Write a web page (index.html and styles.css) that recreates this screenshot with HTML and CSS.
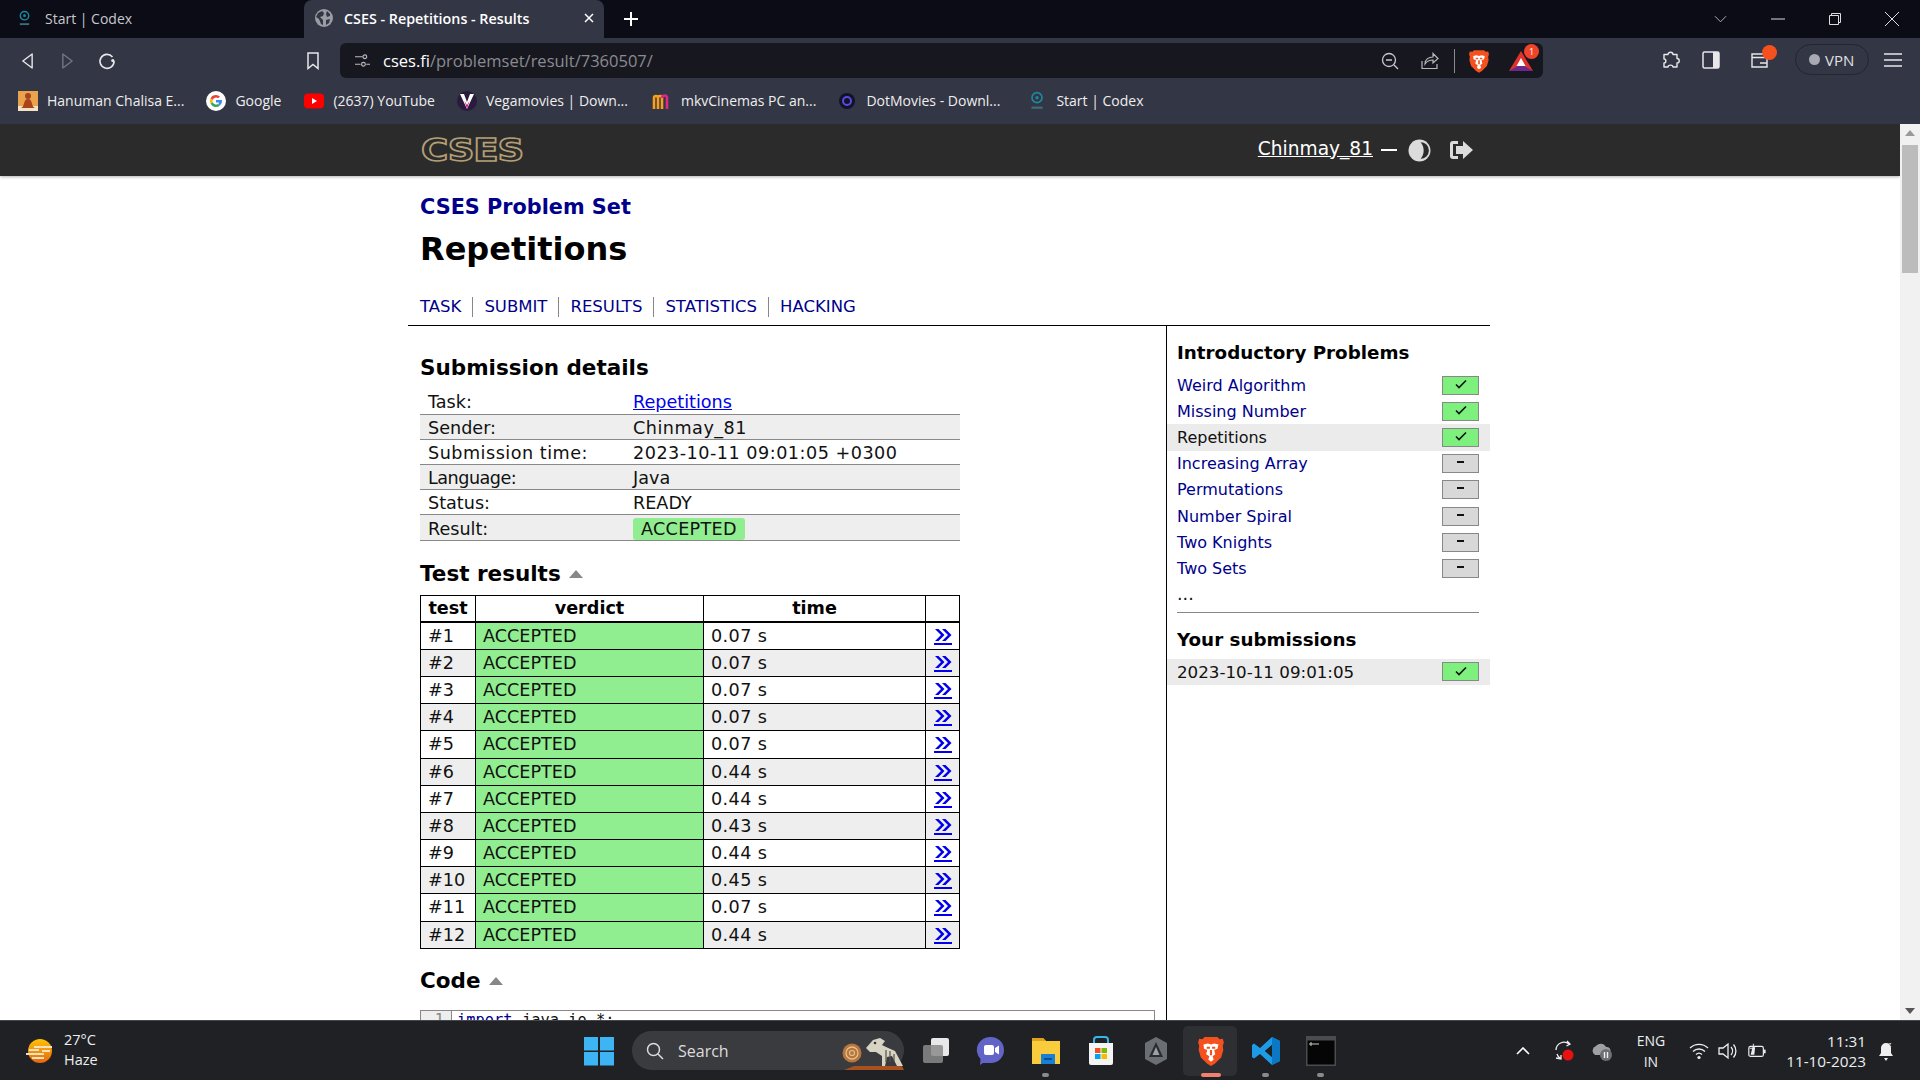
FILE: index.html

```html
<!DOCTYPE html>
<html lang="en">
<head>
  <meta charset="UTF-8" />
  <title>CSES - Repetitions - Results</title>
  <link rel="stylesheet" href="styles.css">
</head>
<body>
  <svg class="defs" width="0" height="0">
    <symbol id="lion" viewBox="0 0 24 28">
      <path fill="#f4511e" d="M6 1h12l2 2 3-.5L24 6l-1 3 .5 4-2 7-6 6-3.500 2-3.500-2-6-6-2-7L1 9 0 6l1-3.500L4 3z"/>
      <path fill="#fff" d="M5 8l4-1 3 1 3-1 4 1-1 4-3 1 1 4-2.500 2 1 3-2.500 2-2.500-2 1-3L7.500 17l1-4-3-1z"/>
      <path fill="#f4511e" d="M8 10h3v2H8zm5 0h3v2h-3zM11 13h2v5h-2z"/>
    </symbol>
    <symbol id="check" viewBox="0 0 14 12">
      <path d="M2 6.500l3 3 7-7" fill="none" stroke="#111" stroke-width="1.600"/>
    </symbol>
    <symbol id="dbl" viewBox="0 0 18 14">
      <path d="M1 1l6 6-6 6h3.500l6-6-6-6zM8 1l6 6-6 6h3.500l6-6-6-6z" fill="#00e"/>
    </symbol>
  </svg>

  <div class="tabbar">
    <div class="tab">
      <svg class="favicon" viewBox="0 0 16 18"><circle cx="8" cy="6" r="4.500" fill="none" stroke="#1b8a9e" stroke-width="1.500"/><circle cx="8" cy="6" r="1.500" fill="#1b8a9e"/><path d="M3 15h10" stroke="#3c6d78" stroke-width="2"/></svg>
      <span>Start | Codex</span>
    </div>
    <div class="tab tab-active">
      <svg class="favicon globe" viewBox="0 0 18 18"><circle cx="9" cy="9" r="9" fill="#9a9ca3"/><path d="M3 4l4-2 2 2-1 3-3 1 3 3 0 5-2-1-2-5-3-2zM12 2l3 3 0 2-3 1-1-3zM11 11l4-1-1 4-3 2z" fill="#333644"/></svg>
      <span class="tab-title">CSES - Repetitions - Results</span>
      <svg class="tab-close" viewBox="0 0 10 10"><path d="M1 1l8 8M9 1l-8 8" stroke="#fff" stroke-width="1.500"/></svg>
    </div>
    <svg class="tab-new" viewBox="0 0 14 14"><path d="M7 0v14M0 7h14" stroke="#fff" stroke-width="2"/></svg>
    <div class="win-controls">
      <svg viewBox="0 0 14 8" class="win-chev"><path d="M1 1l6 6 6-6" fill="none" stroke="#bbb"/></svg>
      <svg viewBox="0 0 14 14" class="win-btn"><path d="M0 7h14" stroke="#ddd"/></svg>
      <svg viewBox="0 0 14 14" class="win-btn"><path d="M1.500 3.500h9v9h-9zM3.500 3V1.500h9v9H11" fill="none" stroke="#ddd"/></svg>
      <svg viewBox="0 0 14 14" class="win-btn"><path d="M0 0l14 14M14 0L0 14" stroke="#ddd"/></svg>
    </div>
  </div>

  <div class="toolbar">
    <div class="nav-btns">
      <svg viewBox="0 0 14 18"><path d="M12 1.500v15L2 9z" fill="none" stroke="#e8e8ea" stroke-width="1.500" stroke-linejoin="round"/></svg>
      <svg viewBox="0 0 14 18"><path d="M2 1.500v15L12 9z" fill="none" stroke="#74767f" stroke-width="1.500" stroke-linejoin="round"/></svg>
      <svg viewBox="0 0 18 18"><path d="M14.500 5A7 7 0 1 0 16 9" fill="none" stroke="#e8e8ea" stroke-width="1.600"/><circle cx="14.800" cy="8.500" r="1.600" fill="#e8e8ea"/></svg>
    </div>
    <svg class="bookmark" viewBox="0 0 14 18"><path d="M2 1h10v15.500l-5-4-5 4z" fill="none" stroke="#e8e8ea" stroke-width="1.500"/></svg>
    <div class="address">
      <svg class="tune" viewBox="0 0 16 16"><path d="M0 4h8M12 12h4M0 12h6" stroke="#bbb" stroke-width="1.200"/><circle cx="10.500" cy="4" r="2" fill="none" stroke="#bbb" stroke-width="1.200"/><circle cx="9" cy="12" r="2" fill="none" stroke="#bbb" stroke-width="1.200"/></svg>
      <span class="url"><b>cses.fi</b>/problemset/result/7360507/</span>
      <svg class="addr-icon" viewBox="0 0 18 18"><circle cx="8" cy="8" r="6.500" fill="none" stroke="#c8c8cc" stroke-width="1.300"/><path d="M5 8h6M13 13l4 4" stroke="#c8c8cc" stroke-width="1.300"/></svg>
      <svg class="addr-icon" viewBox="0 0 18 18"><path d="M1 9v7.500h15V12M4 12c0-5 4-7 8-7V1.500l5 5-5 4.500V8c-4 0-6 1-8 4z" fill="none" stroke="#b8b8bc" stroke-width="1.200"/></svg>
      <i class="addr-sep"></i>
      <svg class="addr-lion"><use href="#lion"/></svg>
      <div class="bat">
        <svg viewBox="0 0 24 20"><path d="M12 0l12 20H0z" fill="#e0322b"/><path d="M0 20l12-7 12 7z" fill="#6a2a8c"/><path d="M12 7l4.500 8h-9z" fill="#fff"/></svg>
        <span class="bat-count">1</span>
      </div>
    </div>
    <svg class="tool-icon puzzle" viewBox="0 0 18 18"><path d="M6 3.500C6 .5 11 .5 11 3.500h4v4c3 0 3 4.500 0 4.500v4h-4c0-2.500-5-2.500-5 0H2v-4c2.500 0 2.500-4 0-4V3.500z" fill="none" stroke="#e8e8ea" stroke-width="1.400" stroke-linejoin="round"/></svg>
    <svg class="tool-icon panel" viewBox="0 0 18 18"><rect x="1" y="1" width="16" height="16" rx="1.500" fill="none" stroke="#e8e8ea" stroke-width="1.500"/><rect x="11" y="1" width="6" height="16" fill="#e8e8ea"/></svg>
    <div class="wallet">
      <svg viewBox="0 0 18 18"><path d="M1 3h15v13H1zM1 6.500h15M9 12h7" fill="none" stroke="#e8e8ea" stroke-width="1.400"/></svg>
      <i class="wallet-dot"></i>
    </div>
    <div class="vpn"><i class="vpn-dot"></i>VPN</div>
    <svg class="tool-icon menu" viewBox="0 0 18 16"><path d="M0 2h18M0 8h18M0 14h18" stroke="#e8e8ea" stroke-width="1.600"/></svg>
  </div>

  <div class="bookmarks">
    <div class="bm bm-a"><svg viewBox="0 0 20 20"><rect width="20" height="20" fill="#e9a24e"/><rect y="15" width="20" height="5" fill="#f3e3c4"/><circle cx="10" cy="5" r="3" fill="#a8431a"/><path d="M10 8c5 0 3 8 7 9H3c4-1 2-9 7-9z" fill="#a8431a"/></svg><span>Hanuman Chalisa E...</span></div>
    <div class="bm bm-b"><svg viewBox="0 0 20 20"><circle cx="10" cy="10" r="10" fill="#fff"/><path d="M10 4a6 6 0 0 1 4 1.500l-1.800 1.800A3.500 3.500 0 0 0 6.700 9L4.600 7.300A6 6 0 0 1 10 4z" fill="#ea4335"/><path d="M4.600 7.300L6.700 9a3.500 3.500 0 0 0 0 2.200l-2.100 1.600a6 6 0 0 1 0-5.500z" fill="#fbbc05"/><path d="M4.600 12.800l2.100-1.600a3.500 3.500 0 0 0 5.200 1.800l2 1.500A6 6 0 0 1 4.600 12.800z" fill="#34a853"/><path d="M16 9h-6v2.400h3.300a3 3 0 0 1-1.400 1.600l2 1.500A6 6 0 0 0 16 9z" fill="#4285f4"/></svg><span>Google</span></div>
    <div class="bm bm-c"><svg viewBox="0 0 20 20"><rect y="2.500" width="20" height="15" rx="4" fill="#f00"/><path d="M8 7l5 3-5 3z" fill="#fff"/></svg><span>(2637) YouTube</span></div>
    <div class="bm bm-d"><svg viewBox="0 0 20 20"><circle cx="10" cy="10" r="10" fill="#2a1a3e"/><path d="M3 3h4l3 8 3-8h4l-7 15z" fill="#fff"/><path d="M7.500 10l2.500 8 2.500-8L10 14z" fill="#d81b7a"/></svg><span>Vegamovies | Down...</span></div>
    <div class="bm bm-e"><svg viewBox="0 0 20 20"><path d="M2 18V7a2 2 0 0 1 4 0v11M6 7a2 2 0 0 1 4 0v11" fill="none" stroke="#f9a01b" stroke-width="2.600"/><path d="M10 7a2.500 2.500 0 0 1 5 0v11" fill="none" stroke="#e0288a" stroke-width="2.600"/></svg><span>mkvCinemas PC an...</span></div>
    <div class="bm bm-f"><svg viewBox="0 0 20 20"><circle cx="10" cy="10" r="8" fill="#12122a"/><circle cx="10" cy="10" r="4" fill="none" stroke="#5a4ae0" stroke-width="2"/></svg><span>DotMovies - Downl...</span></div>
    <div class="bm bm-g"><svg viewBox="0 0 16 18"><circle cx="8" cy="6" r="4.500" fill="none" stroke="#1b8a9e" stroke-width="1.500"/><circle cx="8" cy="6" r="1.500" fill="#1b8a9e"/><path d="M3 15h10" stroke="#3c6d78" stroke-width="2"/></svg><span>Start | Codex</span></div>
  </div>

  <div class="viewport">
    <div class="page">
      <header class="site-head">
        <div class="site-inner">
          <span class="logo">CSES</span>
          <div class="controls">
            <a class="user" href="#">Chinmay_81</a>
            <span class="dash"></span>
            <svg class="contrast" viewBox="0 0 22 22"><circle cx="11" cy="11" r="10.500" fill="#dcdcdc"/><path d="M12 3a8 8 0 0 1 0 16c2-2 3-5 3-8s-1-6-3-8z" fill="#2b2b2b"/></svg>
            <svg class="signout" viewBox="0 0 24 20"><path d="M9 1H4a3 3 0 0 0-3 3v12a3 3 0 0 0 3 3h5v-3H4V4h5z" fill="#dcdcdc"/><path d="M14 1l10 9-10 9v-5H7V6h7z" fill="#dcdcdc"/></svg>
          </div>
        </div>
      </header>

      <div class="skeleton">
        <div class="title-block">
          <h2 class="set-title">CSES Problem Set</h2>
          <h1>Repetitions</h1>
          <div class="nav">
            <a href="#">TASK</a>
            <a href="#">SUBMIT</a>
            <a href="#">RESULTS</a>
            <a href="#">STATISTICS</a>
            <a href="#">HACKING</a>
          </div>
        </div>

        <div class="columns">
          <div class="content">
            <h3 class="first">Submission details</h3>
            <table class="details">
              <tr><td class="label">Task:</td><td><a href="#">Repetitions</a></td></tr>
              <tr><td class="label">Sender:</td><td class="spaced">Chinmay_81</td></tr>
              <tr><td class="label spaced">Submission time:</td><td class="spaced">2023-10-11 09:01:05 +0300</td></tr>
              <tr><td class="label tight">Language:</td><td>Java</td></tr>
              <tr><td class="label">Status:</td><td>READY</td></tr>
              <tr><td class="label">Result:</td><td><span class="verdict-tag">ACCEPTED</span></td></tr>
            </table>

            <h3 class="tests-head">Test results <i class="caret"></i></h3>
            <table class="tests">
              <tr><th class="c-test">test</th><th class="c-verdict">verdict</th><th class="c-time">time</th><th class="c-link"></th></tr>
              <tr><td>#1</td><td class="ok">ACCEPTED</td><td class="t">0.07 s</td><td class="more"><a href="#"><svg><use href="#dbl"/></svg></a></td></tr>
              <tr><td>#2</td><td class="ok">ACCEPTED</td><td class="t">0.07 s</td><td class="more"><a href="#"><svg><use href="#dbl"/></svg></a></td></tr>
              <tr><td>#3</td><td class="ok">ACCEPTED</td><td class="t">0.07 s</td><td class="more"><a href="#"><svg><use href="#dbl"/></svg></a></td></tr>
              <tr><td>#4</td><td class="ok">ACCEPTED</td><td class="t">0.07 s</td><td class="more"><a href="#"><svg><use href="#dbl"/></svg></a></td></tr>
              <tr><td>#5</td><td class="ok">ACCEPTED</td><td class="t">0.07 s</td><td class="more"><a href="#"><svg><use href="#dbl"/></svg></a></td></tr>
              <tr><td>#6</td><td class="ok">ACCEPTED</td><td class="t">0.44 s</td><td class="more"><a href="#"><svg><use href="#dbl"/></svg></a></td></tr>
              <tr><td>#7</td><td class="ok">ACCEPTED</td><td class="t">0.44 s</td><td class="more"><a href="#"><svg><use href="#dbl"/></svg></a></td></tr>
              <tr><td>#8</td><td class="ok">ACCEPTED</td><td class="t">0.43 s</td><td class="more"><a href="#"><svg><use href="#dbl"/></svg></a></td></tr>
              <tr><td>#9</td><td class="ok">ACCEPTED</td><td class="t">0.44 s</td><td class="more"><a href="#"><svg><use href="#dbl"/></svg></a></td></tr>
              <tr><td>#10</td><td class="ok">ACCEPTED</td><td class="t">0.45 s</td><td class="more"><a href="#"><svg><use href="#dbl"/></svg></a></td></tr>
              <tr><td>#11</td><td class="ok">ACCEPTED</td><td class="t">0.07 s</td><td class="more"><a href="#"><svg><use href="#dbl"/></svg></a></td></tr>
              <tr><td>#12</td><td class="ok">ACCEPTED</td><td class="t">0.44 s</td><td class="more"><a href="#"><svg><use href="#dbl"/></svg></a></td></tr>
            </table>

            <h3 class="code-head">Code <i class="caret"></i></h3>
            <div class="code">
              <span class="gutter">1</span>
              <span class="code-line"><span class="kw">import</span> java.io.*;</span>
            </div>
          </div>

          <aside class="sidebar">
            <h4>Introductory Problems</h4>
            <ul class="tasks">
              <li><a href="#">Weird Algorithm</a><span class="badge done"><svg><use href="#check"/></svg></span></li>
              <li><a href="#">Missing Number</a><span class="badge done"><svg><use href="#check"/></svg></span></li>
              <li class="current">Repetitions<span class="badge done"><svg><use href="#check"/></svg></span></li>
              <li><a href="#">Increasing Array</a><span class="badge todo"></span></li>
              <li><a href="#">Permutations</a><span class="badge todo"></span></li>
              <li><a href="#">Number Spiral</a><span class="badge todo"></span></li>
              <li><a href="#">Two Knights</a><span class="badge todo"></span></li>
              <li><a href="#">Two Sets</a><span class="badge todo"></span></li>
            </ul>
            <div class="dots">...</div>
            <hr>
            <h4 class="subs-head">Your submissions</h4>
            <ul class="tasks">
              <li class="current sub-date">2023-10-11 09:01:05<span class="badge done"><svg><use href="#check"/></svg></span></li>
            </ul>
          </aside>
        </div>
      </div>
    </div>
    <div class="scrollbar">
      <i class="arrow-up"></i>
      <div class="thumb"></div>
      <i class="arrow-down"></i>
    </div>
  </div>

  <div class="taskbar">
    <div class="weather">
      <svg viewBox="0 0 30 30"><defs><linearGradient id="sun" x1="0" y1="0" x2="0" y2="1"><stop offset="0" stop-color="#ffc107"/><stop offset="1" stop-color="#e8650e"/></linearGradient></defs><circle cx="16" cy="15" r="12" fill="url(#sun)"/><path d="M2 18h18M10 11h18M5 14h10M18 15h8M8 22h12" stroke="#f3e2c0" stroke-width="2"/></svg>
      <div class="weather-text"><span>27°C</span><span>Haze</span></div>
    </div>
    <div class="task-center">
      <svg class="t-icon" viewBox="0 0 30 30"><path d="M0 1h14v13.500H0zM16 1h14v13.500H16zM0 16h14v13.500H0zM16 16h14v13.500H16z" fill="#3db5f4"/></svg>
      <div class="search">
        <svg viewBox="0 0 18 18"><circle cx="7.500" cy="7.500" r="6" fill="none" stroke="#ddd" stroke-width="1.500"/><path d="M12 12l5 5" stroke="#ddd" stroke-width="1.500"/></svg>
        <span>Search</span>
        <svg class="search-art" viewBox="0 0 62 34"><path d="M2 34l10-4h48l2 4z" fill="#a8501e"/><circle cx="10" cy="17" r="9.500" fill="#b5763d"/><circle cx="10" cy="17" r="6" fill="none" stroke="#e6c08f" stroke-width="1.300"/><circle cx="10" cy="17" r="2.500" fill="none" stroke="#e6c08f" stroke-width="1.200"/><path d="M24 12l7-8 7-2 5 3-3 4 4 2 9 4 8 15h-6l-5-10-5 1-2 9h-3l0-10-6-4-6 0z" fill="#d8d4c4"/><path d="M44 14l0 12M48 15l0 11M52 18l0 8" stroke="#55524a" stroke-width="1.200"/><circle cx="33" cy="7" r="1.300" fill="#333"/></svg>
      </div>
      <svg class="t-icon" viewBox="0 0 30 30"><rect x="10" y="2" width="18" height="18" rx="2" fill="#e8e8e8"/><rect x="2" y="9" width="20" height="18" rx="2" fill="#8a8a8a" opacity=".85"/></svg>
      <svg class="t-icon" viewBox="0 0 30 30"><path d="M15 1a13 13 0 0 1 13 13 13 13 0 0 1-13 13H7l-3 2 .5-6A13 13 0 0 1 15 1z" fill="#6264c7"/><rect x="8" y="9" width="10" height="10" rx="2" fill="#fff"/><path d="M19 12l4-2.500v9L19 16z" fill="#fff"/></svg>
      <div class="t-app open"><svg class="t-icon" viewBox="0 0 30 30"><path d="M1 2h11l3 3h14v23H1z" fill="#f8cc3c"/><path d="M1 2h11l3 3H1z" fill="#e0a21c"/><rect x="10" y="18" width="14" height="10" fill="#1680d6"/><rect x="13" y="22" width="8" height="2" fill="#0b4d8e"/></svg></div>
      <svg class="t-icon" viewBox="0 0 30 30"><path d="M8 8V4a3 3 0 0 1 3-3h8a3 3 0 0 1 3 3v4" fill="none" stroke="#34b6e8" stroke-width="2"/><path d="M3 7h24v20a2 2 0 0 1-2 2H5a2 2 0 0 1-2-2z" fill="#f4f4f4"/><path d="M9 12h5.500v5H9z" fill="#f25022"/><path d="M15.500 12H21v5h-5.500z" fill="#7fba00"/><path d="M9 18h5.500v5H9z" fill="#00a4ef"/><path d="M15.500 18H21v5h-5.500z" fill="#ffb900"/></svg>
      <svg class="t-icon" viewBox="0 0 30 30"><path d="M15 1l11 6v16l-11 6-11-6V7z" fill="#6b6e73"/><path d="M15 6l7 15H8z" fill="#2a2c30"/><path d="M15 11l3.500 8h-7z" fill="#9ea1a6"/></svg>
      <div class="t-app active"><svg class="t-icon"><use href="#lion"/></svg></div>
      <div class="t-app open"><svg class="t-icon" viewBox="0 0 30 30"><path d="M21 1l8 4v20l-8 4-12-11-6 4.500L1 21V9l2-1.500L9 12zM21 9l-7 6 7 6z" fill="#1d9be6"/><path d="M21 1l8 4v20l-8 4z" fill="#0a78c4"/><path d="M21 9l-7 6 7 6z" fill="#1f2124"/></svg></div>
      <div class="t-app open"><svg class="t-icon" viewBox="0 0 30 30"><rect width="30" height="30" fill="#4a4c50"/><rect x="1.500" y="4.500" width="27" height="24" fill="#050505"/><path d="M4 7h2v2H4zM7 8h6" stroke="#ccc"/></svg></div>
    </div>
    <div class="tray">
      <svg class="tray-chev" viewBox="0 0 14 8"><path d="M1 7l6-6 6 6" fill="none" stroke="#fff" stroke-width="1.600"/></svg>
      <svg class="tray-rec" viewBox="0 0 22 22"><path d="M3 10a8 8 0 0 1 13-6M14 1l3 3-3.500 2M4 14a8 8 0 0 0 4 5M3 18l5 1 0-4" fill="none" stroke="#eee" stroke-width="1.300"/><circle cx="15" cy="15" r="5.500" fill="#e81010"/></svg>
      <svg class="tray-cloud" viewBox="0 0 22 22"><path d="M4 15a5 5 0 0 1 1-9 6 6 0 0 1 10 1 4 4 0 0 1 1 8z" fill="#9ea0a4"/><circle cx="15" cy="15" r="6" fill="#6d6f73"/><path d="M13.500 12v6M16.500 12v6" stroke="#eee" stroke-width="1.400"/></svg>
      <div class="lang"><span>ENG</span><span>IN</span></div>
      <svg class="tray-small" viewBox="0 0 20 18"><path d="M1 6a13 13 0 0 1 18 0M4 9.500a8.500 8.500 0 0 1 12 0M7 12.500a4.500 4.500 0 0 1 6 0" fill="none" stroke="#eee" stroke-width="1.300"/><circle cx="10" cy="15.500" r="1.600" fill="#eee"/></svg>
      <svg class="tray-small" viewBox="0 0 20 18"><path d="M1 6h4l5-4v14l-5-4H1z" fill="none" stroke="#eee" stroke-width="1.300"/><path d="M13 5a6 6 0 0 1 0 8M15.500 2.500a10 10 0 0 1 0 13" fill="none" stroke="#eee" stroke-width="1.300"/></svg>
      <svg class="tray-small" viewBox="0 0 22 18"><rect x="2" y="4" width="16" height="11" rx="2" fill="none" stroke="#eee" stroke-width="1.300"/><rect x="18.500" y="7.500" width="2" height="4" fill="#eee"/><path d="M4 13l2-8h3L8 13z" fill="#eee"/><path d="M7 1v5H3" fill="none" stroke="#eee"/></svg>
      <div class="clock"><span>11:31</span><span>11-10-2023</span></div>
      <svg class="tray-bell" viewBox="0 0 18 22"><path d="M9 3a5 5 0 0 1 5 5v5l2 3H2l2-3V8a5 5 0 0 1 5-5zM7 18h4l-2 3z" fill="#eee"/><text x="11" y="7" font-size="7" fill="#eee" font-family="Open Sans, sans-serif">z</text></svg>
    </div>
  </div>
</body>
</html>
```

FILE: styles.css

```css
* {
  box-sizing: border-box;
}

html, body {
  margin: 0;
  height: 100%;
  overflow: hidden;
}

body {
  display: flex;
  flex-direction: column;
  width: 1920px;
  height: 1080px;
  font-family: 'Open Sans', sans-serif;
  background: #333644;
}

.defs {
  position: absolute;
}

/* browser chrome */
.tabbar {
  display: flex;
  align-items: center;
  height: 38px;
  background: #0b0c16;
  color: #c8c8cc;
  font-size: 14px;
}

.tab {
  display: flex;
  align-items: center;
  width: 304px;
  height: 38px;
  padding: 0 0 2px 17px;
}

.favicon {
  width: 15px;
  height: 17px;
  margin-right: 13px;
  flex: none;
}

.tab-active {
  width: 300px;
  border-radius: 8px 8px 0 0;
  background: #333644;
  color: #fff;
  padding-left: 11px;
  font-weight: 600;
  font-size: 14.300px;
}

.globe {
  width: 18px;
  height: 18px;
  margin-right: 11px;
}

.tab-title {
  flex: 1;
}

.tab-close {
  width: 10px;
  height: 10px;
  margin-right: 10px;
}

.tab-new {
  width: 14px;
  height: 14px;
  margin-left: 20px;
}

.win-controls {
  display: flex;
  align-items: center;
  margin-left: auto;
  padding-right: 21px;
  gap: 43px;
}

.win-chev {
  width: 13px;
  height: 8px;
  margin-right: 1px;
}

.win-btn {
  width: 14px;
  height: 14px;
}

.toolbar {
  display: flex;
  align-items: center;
  height: 45px;
  background: #333644;
}

.nav-btns {
  display: flex;
  align-items: center;
  gap: 27px;
  padding-left: 21px;
  width: 306px;
}

.nav-btns svg {
  width: 13px;
  height: 18px;
}

.nav-btns svg:last-child {
  width: 18px;
  margin-left: -3px;
}

.bookmark {
  width: 14px;
  height: 18px;
  margin-right: 20px;
}

.address {
  display: flex;
  align-items: center;
  width: 1203px;
  height: 35px;
  padding-left: 15px;
  border-radius: 6px;
  background: #17181f;
}

.tune {
  width: 15px;
  height: 15px;
  margin-right: 13px;
}

.url {
  flex: 1;
  font-size: 16.500px;
  color: #8a8b91;
}

.url b {
  font-weight: 400;
  color: #fff;
}

.addr-icon {
  width: 18px;
  height: 18px;
  margin-right: 22px;
}

.addr-sep {
  width: 1px;
  height: 24px;
  margin: 0 14px 0 -7px;
  background: #8a8b91;
}

.addr-lion {
  width: 20px;
  height: 24px;
  margin-right: 20px;
}

.bat {
  position: relative;
  width: 24px;
  height: 20px;
  margin-right: 10px;
}

.bat svg {
  width: 24px;
  height: 20px;
}

.bat-count {
  position: absolute;
  top: -7px;
  right: -6px;
  width: 15px;
  height: 15px;
  border-radius: 50%;
  background: #f0442a;
  color: #fff;
  font-size: 9px;
  line-height: 15px;
  text-align: center;
}

.tool-icon {
  width: 18px;
  height: 18px;
  margin-top: -2px;
}

.puzzle {
  margin-left: 119px;
}

.panel {
  margin-left: 22px;
}

.wallet {
  position: relative;
  width: 18px;
  height: 18px;
  margin-top: -2px;
  margin-left: 31px;
}

.wallet svg {
  width: 18px;
  height: 18px;
}

.wallet-dot {
  position: absolute;
  top: -6px;
  left: 11px;
  width: 15px;
  height: 15px;
  border-radius: 50%;
  background: #f4511e;
}

.vpn {
  display: flex;
  align-items: center;
  width: 74px;
  height: 31px;
  margin-top: -2px;
  margin-left: 26px;
  padding-left: 13px;
  border: 1px solid #23252f;
  border-radius: 16px;
  color: #e0e0e3;
  font-size: 15px;
}

.vpn-dot {
  width: 11px;
  height: 11px;
  margin-right: 5px;
  border-radius: 50%;
  background: #a8a9b3;
}

.menu {
  margin-left: 15px;
  height: 16px;
}

.bookmarks {
  display: flex;
  align-items: center;
  height: 41px;
  padding-bottom: 6px;
  color: #eee;
  font-size: 14px;
}

.bm {
  display: flex;
  align-items: center;
  gap: 9px;
}

.bm svg {
  width: 20px;
  height: 20px;
}

.bm-a { margin-left: 18px; }
.bm-b { margin-left: 22px; }
.bm-c { margin-left: 23px; }
.bm-d { margin-left: 22px; }
.bm-e { margin-left: 24px; }
.bm-f { margin-left: 21px; }
.bm-g { margin-left: 27px; }

/* page */
.viewport {
  display: flex;
  height: 896px;
  overflow: hidden;
  background: #fff;
}

.page {
  flex: 1;
  font-family: 'DejaVu Sans', sans-serif;
  font-size: 17.6px;
  color: #111;
}

.site-head {
  height: 52px;
  background: #2b2b2b;
  box-shadow: 0 1px 3px rgba(0,0,0,0.3);
  color: #fff;
}

.site-inner {
  display: flex;
  align-items: center;
  justify-content: space-between;
  width: 1082px;
  height: 52px;
  margin-left: 408px;
  padding: 0 17px 0 13px;
}

.logo {
  font-weight: 700;
  font-size: 32px;
  letter-spacing: -1px;
  color: #2b2b2b;
  -webkit-text-stroke: 1.6px #b49f75;
  transform: scaleX(1.16);
  transform-origin: left;
}

.controls {
  display: flex;
  align-items: center;
  font-size: 18.600px;
}

.user {
  color: #fff;
  margin-top: -4px;
}

.dash {
  width: 16px;
  height: 2px;
  margin: 0 11px 0 8px;
  background: #fff;
}

.contrast {
  width: 23px;
  height: 23px;
}

.signout {
  width: 24px;
  height: 20px;
  margin-left: 18px;
}

.skeleton {
  width: 1082px;
  margin-left: 408px;
}

.title-block {
  padding: 16px 12px 6px;
  border-bottom: 1px solid #000;
}

.set-title {
  margin: 0;
  font-size: 20.800px;
  line-height: 30px;
  color: #00008b;
}

h1 {
  margin: 7px 0 0;
  font-size: 32px;
  line-height: 40px;
  color: #000;
}

.nav {
  display: flex;
  margin-top: 26px;
  line-height: 24px;
  font-size: 16.500px;
}

.nav a {
  padding-right: 11px;
  margin-right: 11px;
  border-right: 1px solid #888;
  color: #00008b;
  text-decoration: none;
  line-height: 20px;
  margin-top: 2px;
  margin-bottom: 2px;
}

.nav a:last-child {
  border: none;
}

.columns {
  display: flex;
}

.content {
  width: 759px;
  height: 800px;
  padding: 0 12px;
  border-right: 1px solid #000;
}

h3 {
  margin: 0;
  font-size: 21.500px;
  line-height: 28px;
  color: #000;
}

.first {
  margin-top: 28px;
  margin-bottom: 7px;
}

table {
  border-collapse: collapse;
  width: 540px;
}

.details td {
  height: 25.2px;
  padding: 2px 0 0;
  border-bottom: 1px solid #888;
  line-height: 20px;
}

.details tr:nth-child(even) {
  background: #eee;
}

.details .label {
  width: 213px;
  padding-left: 8px;
}

.details .spaced {
  letter-spacing: 0.5px;
}

.details .tight {
  letter-spacing: -0.5px;
}

.details a {
  color: #00e;
}

.verdict-tag {
  display: inline-block;
  padding: 0 8px;
  border-radius: 3px;
  background: #90ee90;
  letter-spacing: 0.3px;
  line-height: 22px;
}

.tests-head {
  margin: 19px 0 7px;
}

.caret {
  display: inline-block;
  width: 0;
  height: 0;
  margin-left: 1px;
  border: 7px solid transparent;
  border-top: 0;
  border-bottom: 8px solid #888;
  vertical-align: 3px;
}

.tests th, .tests td {
  height: 27.160px;
  padding: 0 7px;
  border: 1px solid #000;
  line-height: 20px;
}

.tests th {
  border-bottom-width: 2px;
  color: #000;
}

.tests tr:nth-child(odd) td {
  background: #eee;
}

.tests td.ok, .tests tr:nth-child(odd) td.ok {
  background: #90ee90;
}

.tests .t {
  letter-spacing: 0.4px;
}

.c-test { width: 55px; }
.c-verdict { width: 228px; }
.c-time { width: 222px; }

.tests .more {
  padding: 0;
  text-align: center;
}

.more a {
  display: inline-block;
  line-height: 0;
  padding-bottom: 1px;
  border-bottom: 2px solid #00e;
}

.more svg {
  width: 18px;
  height: 14px;
}

.code-head {
  margin: 18px 0 15px;
}

.code {
  display: flex;
  width: 735px;
  height: 40px;
  border: 1px solid #888;
  border-bottom: none;
  font-family: 'DejaVu Sans Mono', monospace;
  font-size: 15.400px;
}

.gutter {
  width: 31px;
  padding-right: 7px;
  background: #eee;
  border-right: 1px solid #888;
  color: #888;
  text-align: right;
}

.code-line {
  padding-left: 5px;
}

.kw {
  color: #00008b;
}

.sidebar {
  width: 323px;
}

h4 {
  margin: 0;
  padding: 0 10px;
  font-size: 18.300px;
  color: #000;
}

.sidebar > h4:first-child {
  margin-top: 15px;
  line-height: 24px;
  margin-bottom: 7px;
}

.tasks {
  list-style: none;
  margin: 0;
  padding: 0;
  font-size: 16px;
}

.tasks li {
  display: flex;
  align-items: center;
  justify-content: space-between;
  height: 26.200px;
  padding: 0 11px 0 10px;
}

.tasks .sub-date {
  font-size: 16.700px;
}

.tasks a {
  color: #00008b;
  text-decoration: none;
}

.tasks .current {
  background: #ebebeb;
}

.badge {
  display: flex;
  align-items: center;
  justify-content: center;
  width: 37px;
  height: 19px;
  border: 1px solid #888;
}

.badge svg {
  width: 14px;
  height: 12px;
  margin-top: -2px;
}

.done {
  background: #7df07d;
}

.todo {
  background: #d8d8d8;
}

.todo::before {
  content: "";
  width: 7px;
  height: 2px;
  margin-top: -3px;
  background: #111;
}

.dots {
  height: 30px;
  padding-left: 10px;
  line-height: 24px;
}

hr {
  margin: 0 11px 0 10px;
  border: none;
  border-top: 1px solid #888;
}

.subs-head {
  margin-top: 15px;
  margin-bottom: 7px;
  line-height: 24px;
}

.scrollbar {
  position: relative;
  width: 20px;
  background: #f1f1f1;
}

.thumb {
  position: absolute;
  top: 21px;
  left: 2px;
  width: 16px;
  height: 128px;
  background: #bcbcbc;
}

.arrow-up, .arrow-down {
  position: absolute;
  left: 5px;
  width: 0;
  height: 0;
  border: 5px solid transparent;
}

.arrow-up {
  top: 6px;
  border-top: 0;
  border-bottom: 6px solid #999;
}

.arrow-down {
  bottom: 6px;
  border-bottom: 0;
  border-top: 6px solid #555;
}

/* windows taskbar */
.taskbar {
  position: relative;
  display: flex;
  align-items: center;
  height: 60px;
  border-top: 1px solid #45474c;
  background: #1f2124;
  color: #eee;
  font-size: 14px;
}

.weather {
  display: flex;
  align-items: center;
  gap: 10px;
  padding-left: 24px;
  width: 580px;
}

.weather svg {
  width: 30px;
  height: 30px;
}

.weather-text {
  display: flex;
  flex-direction: column;
  margin-top: -2px;
  font-size: 14.500px;
  line-height: 20px;
}

.task-center {
  display: flex;
  align-items: center;
}

.t-icon {
  display: block;
  width: 30px;
  height: 30px;
  margin-right: 25px;
}

.task-center > .t-icon:first-child {
  margin-right: 18px;
  margin-left: 4px;
}

.search {
  display: flex;
  align-items: center;
  width: 272px;
  height: 39px;
  margin-right: 17px;
  padding-left: 14px;
  border-radius: 20px;
  background: #3a3b3f;
  color: #ddd;
  font-size: 16px;
}

.search svg {
  width: 18px;
  height: 18px;
  margin-right: 14px;
}

.search .search-art {
  width: 62px;
  height: 34px;
  margin: 5px 0 0 auto;
}

.t-app {
  position: relative;
  margin-right: 25px;
}

.t-app .t-icon {
  margin-right: 0;
}

.t-app::after {
  position: absolute;
  left: 11px;
  bottom: -11px;
  width: 7px;
  height: 4px;
  border-radius: 2px;
}

.open::after {
  content: "";
  background: #8a8b8d;
}

.active::before {
  content: "";
  position: absolute;
  top: -10px;
  left: -13px;
  width: 54px;
  height: 50px;
  border-radius: 5px;
  background: #2d2f32;
  z-index: 0;
}

.active .t-icon {
  position: relative;
}

.active::after {
  content: "";
  left: 5px;
  width: 20px;
  background: #f08070;
}

.tray {
  position: absolute;
  top: 0;
  right: 0;
  display: flex;
  align-items: center;
  height: 59px;
  padding-right: 25px;
}

.tray-chev {
  width: 14px;
  height: 8px;
  margin-right: 23px;
}

.tray-rec {
  width: 22px;
  height: 22px;
  margin-right: 16px;
}

.tray-cloud {
  width: 22px;
  height: 22px;
  margin-right: 18px;
}

.lang {
  display: flex;
  flex-direction: column;
  align-items: center;
  margin: 0 24px 0 6px;
  line-height: 21px;
}

.tray-small {
  width: 20px;
  height: 18px;
  margin-right: 9px;
}

.clock {
  display: flex;
  flex-direction: column;
  align-items: flex-end;
  margin-left: 10px;
  font-size: 15.300px;
  line-height: 20px;
}

.tray-bell {
  width: 18px;
  height: 22px;
  margin-left: 11px;
}
```
